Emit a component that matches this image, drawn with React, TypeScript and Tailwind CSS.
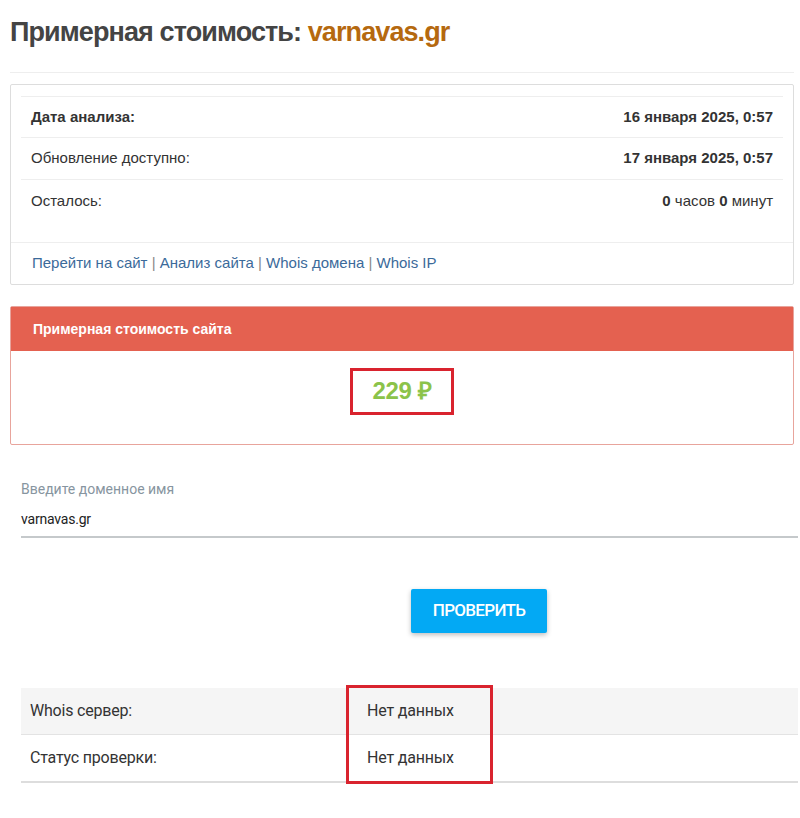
export default function App() {
  return (
    <div className="w-[800px] h-[818px] bg-white text-[#333] font-['Liberation_Sans',Arial,sans-serif]">
      <div className="pl-[10px] pr-[6px]">
        <h1 className="pt-[15px] text-[27px] leading-[34px] font-bold text-[#444] tracking-[-0.9px]">
          Примерная стоимость: <span className="text-[#b5690f]">varnavas.gr</span>
        </h1>
        <div className="mt-[23px] border-t border-[#eee]" />

        {/* info card */}
        <div className="mt-[11px] border border-[#ddd] rounded-[2px]">
          <div className="px-[10px] pt-[11px] pb-[20px]">
            <div className="border-t border-[#eee] text-[15px]">
              <div className="flex justify-between items-center h-[41px] px-[10px] border-b border-[#eee]">
                <span className="font-bold">Дата анализа:</span>
                <span className="font-bold">16 января 2025, 0:57</span>
              </div>
              <div className="flex justify-between items-center h-[42px] px-[10px] border-b border-[#eee]">
                <span>Обновление доступно:</span>
                <span className="font-bold">17 января 2025, 0:57</span>
              </div>
              <div className="flex justify-between items-center h-[42px] px-[10px]">
                <span>Осталось:</span>
                <span>
                  <b>0</b> часов <b>0</b> минут
                </span>
              </div>
            </div>
          </div>
          <div className="border-t border-[#eee] px-[21px] h-[42px] flex items-center text-[15px] text-[#3b6a9a] whitespace-pre">
            <a>Перейти на сайт</a>
            <span className="text-[#888]"> | </span>
            <a>Анализ сайта</a>
            <span className="text-[#888]"> | </span>
            <a>Whois домена</a>
            <span className="text-[#888]"> | </span>
            <a>Whois IP</a>
          </div>
        </div>

        {/* price panel */}
        <div className="mt-[21px] border border-[#e8a49c] rounded-[2px]">
          <div className="bg-[#e46150] h-[44px] px-[22px] flex items-center text-white text-[14px] font-bold">
            Примерная стоимость сайта
          </div>
          <div className="h-[93px] flex items-center justify-center">
            <div className="border-[3px] border-[#d9232e] w-[104px] h-[47px] flex items-center justify-center mt-[-13px]">
              <span className="text-[24px] font-bold text-[#8bc34a] tracking-[-0.3px]">229 ₽</span>
            </div>
          </div>
        </div>
      </div>

      {/* domain form */}
      <div className="pl-[21px] pr-[2px] font-['Roboto',sans-serif]">
        <div className="mt-[34px] text-[14px] text-[#8795a0]">Введите доменное имя</div>
        <div className="mt-[9px] pb-[6px] border-b-2 border-[#c5c9cb] text-[14px] text-[#222] tracking-[-0.2px]">
          varnavas.gr
        </div>
        <div className="flex mt-[51px] pl-[390px]">
          <button className="w-[136px] h-[44px] bg-[#03a9f4] text-white text-[17px] font-medium tracking-[-0.7px] rounded-[2px] shadow-[0_2px_5px_rgba(0,0,0,0.26)]">
            ПРОВЕРИТЬ
          </button>
        </div>

        <div className="mt-[55px] relative text-[16px] text-[#333] tracking-[-0.2px]">
          <div className="flex items-center h-[47px] bg-[#f5f5f5] border-b border-[#e3e3e3]">
            <span className="w-[346px] pl-[9px]">Whois сервер:</span>
            <span>Нет данных</span>
          </div>
          <div className="flex items-center h-[48px] border-b-2 border-[#ddd]">
            <span className="w-[346px] pl-[9px]">Статус проверки:</span>
            <span>Нет данных</span>
          </div>
          <div className="absolute left-[325px] top-[-3px] w-[147px] h-[99px] border-[3px] border-[#d9232e]" />
        </div>
      </div>
    </div>
  );
}
